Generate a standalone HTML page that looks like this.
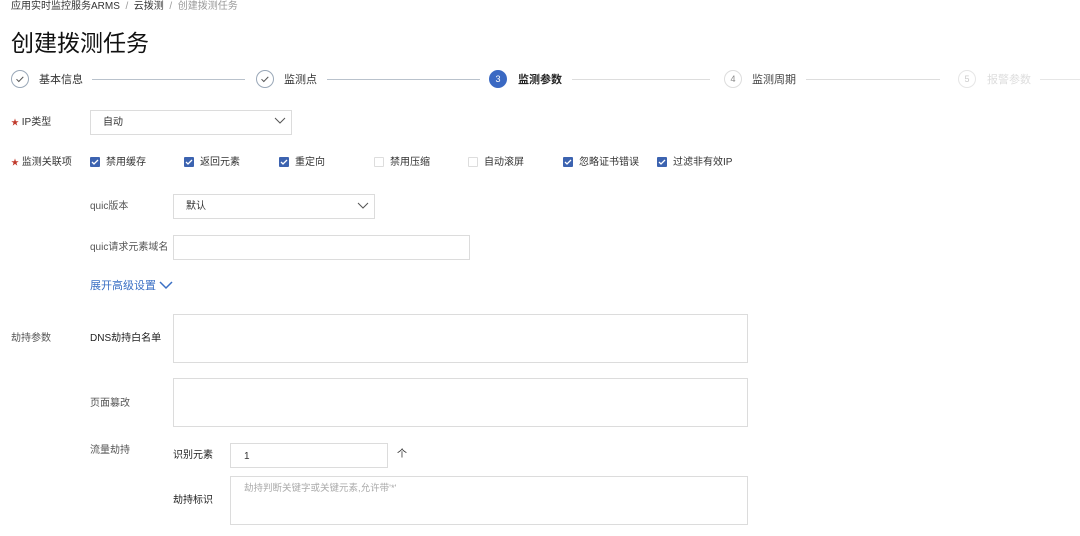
<!DOCTYPE html>
<html><head><meta charset="utf-8"><style>
*{margin:0;padding:0;box-sizing:border-box}
body{width:1080px;height:536px;background:#fff;position:relative;overflow:hidden;font-family:"Liberation Sans","Noto Sans CJK SC",sans-serif;color:#333;font-size:10px}
.a{position:absolute;white-space:nowrap}
.t{line-height:12px}
.box{position:absolute;border:1px solid #dcdcdc;background:#fff}
.c{position:absolute;width:18px;height:18px;border-radius:50%;border:1px solid #9aa8b8;top:70px}
.ln{position:absolute;height:1px;background:#b9c2cc;top:79px}
.cb{position:absolute;width:10px;height:10px;top:157px;border-radius:1px}
.on{background:#3c63b0}
.off{border:1px solid #ddd}
.star{color:#c0392b;font-size:8px}
</style></head><body>
<div class="a t" style="left:11px;top:1px;font-size:10px;color:#333">应用实时监控服务ARMS <span style="color:#999">&nbsp;/&nbsp;</span> 云拨测 <span style="color:#999">&nbsp;/&nbsp;</span> <span style="color:#999">创建拨测任务</span></div>
<div class="a" style="left:11px;top:28px;font-size:23px;line-height:30px;color:#111">创建拨测任务</div>

<div class="c" style="left:11px"><svg width="16" height="16" viewBox="0 0 16 16"><path d="M4.5 8.2l2.3 2.3 4.5-4.6" fill="none" stroke="#555" stroke-width="1"/></svg></div>
<div class="a t" style="left:39px;top:74px;font-size:11px">基本信息</div>
<div class="ln" style="left:92px;width:153px"></div>
<div class="c" style="left:256px"><svg width="16" height="16" viewBox="0 0 16 16"><path d="M4.5 8.2l2.3 2.3 4.5-4.6" fill="none" stroke="#555" stroke-width="1"/></svg></div>
<div class="a t" style="left:284px;top:74px;font-size:11px">监测点</div>
<div class="ln" style="left:327px;width:153px"></div>
<div class="c" style="left:489px;background:#3a69c3;border-color:#3a69c3;color:#fff;font-size:9px;text-align:center;line-height:16px">3</div>
<div class="a t" style="left:518px;top:74px;font-size:11px;font-weight:bold;color:#222">监测参数</div>
<div class="ln" style="left:572px;width:138px;background:#ddd"></div>
<div class="c" style="left:724px;border-color:#ddd;color:#888;font-size:9px;text-align:center;line-height:16px">4</div>
<div class="a t" style="left:752px;top:74px;font-size:11px;color:#444">监测周期</div>
<div class="ln" style="left:806px;width:134px;background:#ddd"></div>
<div class="c" style="left:958px;border-color:#e6e6e6;color:#ccc;font-size:9px;text-align:center;line-height:16px">5</div>
<div class="a t" style="left:987px;top:74px;font-size:11px;color:#ddd">报警参数</div>
<div class="ln" style="left:1040px;width:40px;background:#e6e6e6"></div>

<div class="a t" style="left:11px;top:117px"><span class="star">★</span> IP类型</div>
<div class="box" style="left:90px;top:110px;width:202px;height:25px"></div>
<div class="a t" style="left:103px;top:117px">自动</div>
<svg class="a" style="left:274px;top:117px" width="12" height="8"><path d="M1 1l5 5 5-5" fill="none" stroke="#555"/></svg>

<div class="a t" style="left:11px;top:157px"><span class="star">★</span> 监测关联项</div>
<div class="cb on" style="left:90px"></div><div class="a t" style="left:106px;top:157px">禁用缓存</div>
<div class="cb on" style="left:184px"></div><div class="a t" style="left:200px;top:157px">返回元素</div>
<div class="cb on" style="left:279px"></div><div class="a t" style="left:295px;top:157px">重定向</div>
<div class="cb off" style="left:374px"></div><div class="a t" style="left:390px;top:157px">禁用压缩</div>
<div class="cb off" style="left:468px"></div><div class="a t" style="left:484px;top:157px">自动滚屏</div>
<div class="cb on" style="left:563px"></div><div class="a t" style="left:579px;top:157px">忽略证书错误</div>
<div class="cb on" style="left:657px"></div><div class="a t" style="left:673px;top:157px">过滤非有效IP</div>
<svg class="a" style="left:90px;top:157px" width="600" height="10"><g fill="none" stroke="#fff" stroke-width="1.3"><path d="M2 5l2 2 4-4"/><path d="M96 5l2 2 4-4"/><path d="M191 5l2 2 4-4"/><path d="M475 5l2 2 4-4"/><path d="M569 5l2 2 4-4"/></g></svg>

<div class="a t" style="left:90px;top:201px;color:#555">quic版本</div>
<div class="box" style="left:173px;top:194px;width:202px;height:25px"></div>
<div class="a t" style="left:186px;top:201px">默认</div>
<svg class="a" style="left:357px;top:202px" width="12" height="8"><path d="M1 1l5 5 5-5" fill="none" stroke="#555"/></svg>

<div class="a t" style="left:90px;top:242px;color:#555">quic请求元素域名</div>
<div class="box" style="left:173px;top:235px;width:297px;height:25px"></div>

<div class="a" style="left:90px;top:279px;font-size:11px;line-height:14px;color:#3a6fc4">展开高级设置</div>
<svg class="a" style="left:159px;top:281px" width="14" height="9"><path d="M1 1l6 6 6-6" fill="none" stroke="#3a6fc4" stroke-width="1.5"/></svg>

<div class="a t" style="left:11px;top:333px;color:#555">劫持参数</div>
<div class="a t" style="left:90px;top:333px;color:#222">DNS劫持白名单</div>
<div class="box" style="left:173px;top:314px;width:575px;height:49px"></div>

<div class="a t" style="left:90px;top:398px;color:#555">页面篡改</div>
<div class="box" style="left:173px;top:378px;width:575px;height:49px"></div>

<div class="a t" style="left:90px;top:445px;color:#555">流量劫持</div>
<div class="a t" style="left:173px;top:450px;color:#222">识别元素</div>
<div class="box" style="left:230px;top:443px;width:158px;height:25px"></div>
<div class="a t" style="left:244px;top:451px">1</div>
<div class="a t" style="left:397px;top:449px">个</div>

<div class="a t" style="left:173px;top:495px;color:#222">劫持标识</div>
<div class="box" style="left:230px;top:476px;width:518px;height:49px"></div>
<div class="a t" style="left:244px;top:483px;color:#aaa;font-size:9.5px">劫持判断关键字或关键元素,允许带'*'</div>
</body></html>
